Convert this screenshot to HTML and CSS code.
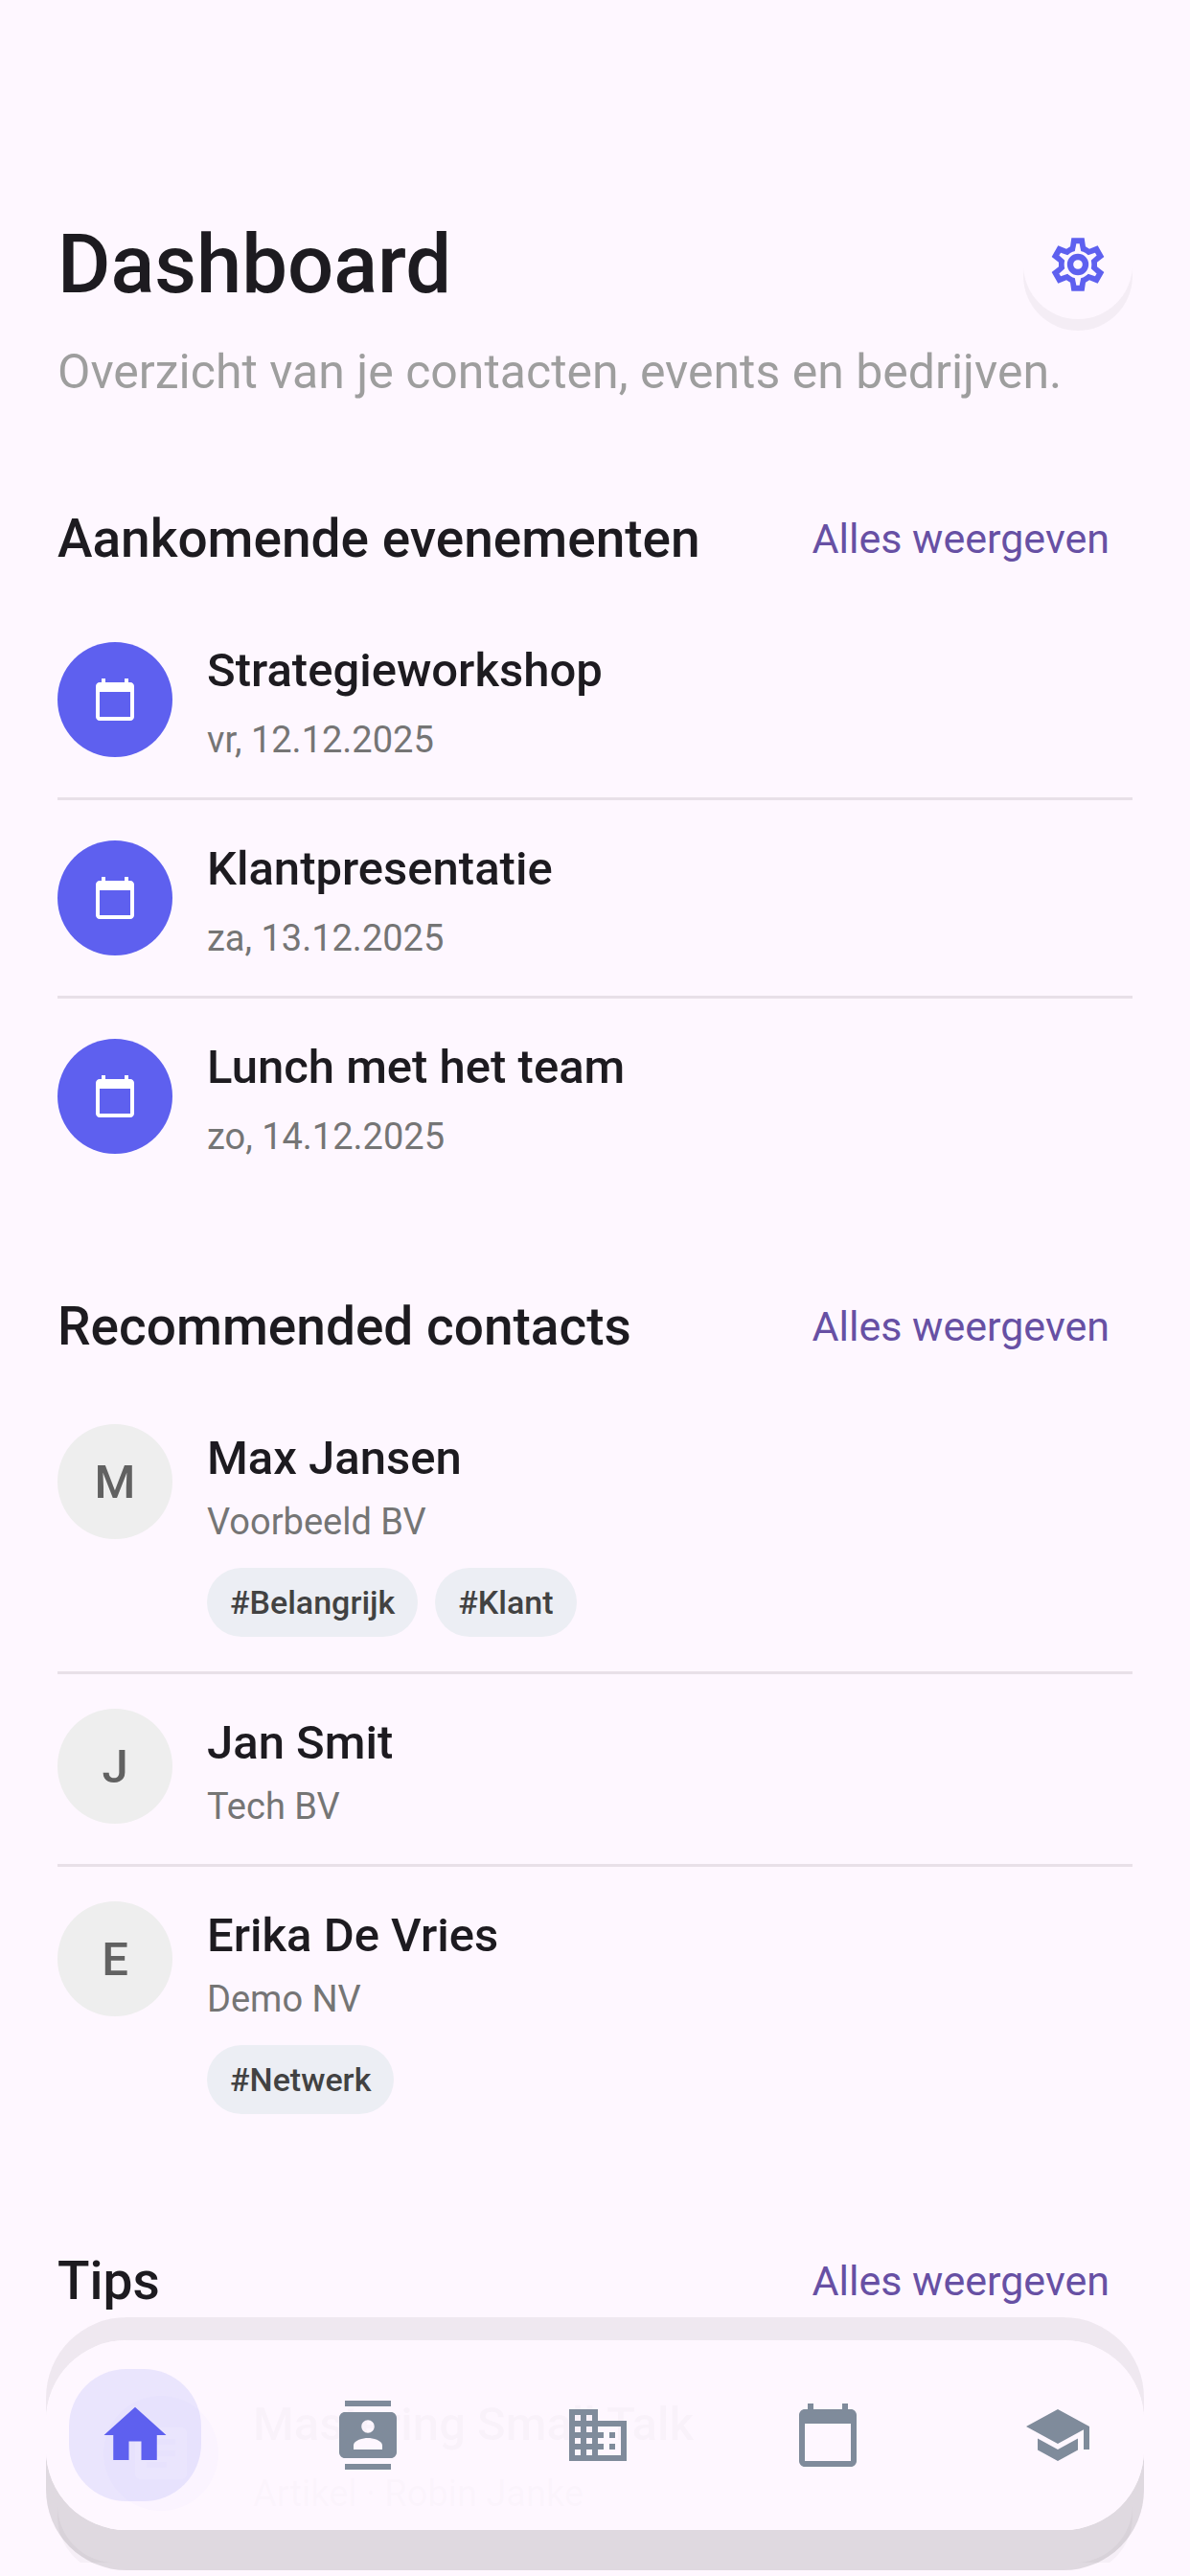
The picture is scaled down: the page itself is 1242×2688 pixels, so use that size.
FILE: index.html
```html
<!DOCTYPE html>
<html lang="nl">

<head>
    <meta charset="UTF-8">
    <meta name="viewport" content="width=device-width, initial-scale=1.0">
    <title>Dashboard</title>
    <link rel="stylesheet" href="styles.css">
</head>

<body>
    <!-- Shared icons -->
    <svg class="icon-defs" aria-hidden="true">
        <symbol id="icon-calendar" viewBox="0 0 24 24">
            <path d="M20 3h-1V1h-2v2H7V1H5v2H4c-1.1 0-2 .9-2 2v16c0 1.1.9 2 2 2h16c1.1 0 2-.9 2-2V5c0-1.1-.9-2-2-2zm0 18H4V8h16v13z" />
        </symbol>
    </svg>

    <main class="container">
        <header class="page-header">
            <div class="title-row">
                <h1>Dashboard</h1>
                <button type="button" class="settings-btn" aria-label="Instellingen">
                    <svg viewBox="-99 -99 198 198">
                        <path d="M-24-56-20-83H20L24-56 36-49 62-59 82-24 60-7V7L82 24 62 59 36 49 24 56 20 83H-20L-24 56-36 49-62 59-82 24-60 7V-7L-82-24-62-59-36-49z" />
                        <g class="gear-cutout">
                            <circle r="43" />
                            <path d="M-10-40-5-65H5L10-40z" />
                            <path d="M-10-40-5-65H5L10-40z" transform="rotate(60)" />
                            <path d="M-10-40-5-65H5L10-40z" transform="rotate(120)" />
                            <path d="M-10-40-5-65H5L10-40z" transform="rotate(180)" />
                            <path d="M-10-40-5-65H5L10-40z" transform="rotate(240)" />
                            <path d="M-10-40-5-65H5L10-40z" transform="rotate(300)" />
                        </g>
                        <circle class="gear-hub" r="24" />
                    </svg>
                </button>
            </div>
            <p class="subtitle">Overzicht van je contacten, events en bedrijven.</p>
        </header>

        <section class="section">
            <div class="section-header">
                <h2>Aankomende evenementen</h2>
                <a href="#events">Alles weergeven</a>
            </div>
            <ul class="list">
                <li class="list-item event">
                    <span class="avatar avatar-icon"><svg><use href="#icon-calendar" /></svg></span>
                    <div>
                        <h3>Strategieworkshop</h3>
                        <p>vr, 12.12.2025</p>
                    </div>
                </li>
                <li class="list-item event">
                    <span class="avatar avatar-icon"><svg><use href="#icon-calendar" /></svg></span>
                    <div>
                        <h3>Klantpresentatie</h3>
                        <p>za, 13.12.2025</p>
                    </div>
                </li>
                <li class="list-item event">
                    <span class="avatar avatar-icon"><svg><use href="#icon-calendar" /></svg></span>
                    <div>
                        <h3>Lunch met het team</h3>
                        <p>zo, 14.12.2025</p>
                    </div>
                </li>
            </ul>
        </section>

        <section class="section">
            <div class="section-header">
                <h2>Recommended contacts</h2>
                <a href="#contacts">Alles weergeven</a>
            </div>
            <ul class="list">
                <li class="list-item">
                    <span class="avatar">M</span>
                    <div>
                        <h3>Max Jansen</h3>
                        <p>Voorbeeld BV</p>
                        <div class="tags">
                            <span class="tag">#Belangrijk</span>
                            <span class="tag">#Klant</span>
                        </div>
                    </div>
                </li>
                <li class="list-item">
                    <span class="avatar">J</span>
                    <div>
                        <h3>Jan Smit</h3>
                        <p>Tech BV</p>
                    </div>
                </li>
                <li class="list-item">
                    <span class="avatar">E</span>
                    <div>
                        <h3>Erika De Vries</h3>
                        <p>Demo NV</p>
                        <div class="tags">
                            <span class="tag">#Netwerk</span>
                        </div>
                    </div>
                </li>
            </ul>
        </section>

        <section class="section">
            <div class="section-header">
                <h2>Tips</h2>
                <a href="#tips">Alles weergeven</a>
            </div>
            <article class="tip-card">
                <span class="avatar avatar-icon">
                    <svg viewBox="0 0 24 24">
                        <path d="M19 3H5c-1.1 0-2 .9-2 2v14c0 1.1.9 2 2 2h14c1.1 0 2-.9 2-2V5c0-1.1-.9-2-2-2zm-5 14H7v-2h7v2zm3-4H7v-2h10v2zm0-4H7V7h10v2z" />
                    </svg>
                </span>
                <div>
                    <h3>Mastering Small Talk</h3>
                    <p>Artikel · Robin Janke</p>
                </div>
            </article>
        </section>
    </main>

    <!-- Bottom navigation -->
    <nav class="bottom-nav">
        <a href="#home" class="nav-item active" aria-label="Home">
            <svg viewBox="0 0 24 24"><path d="M10 20v-6h4v6h5v-8h3L12 3 2 12h3v8z" /></svg>
        </a>
        <a href="#contacts" class="nav-item" aria-label="Contacten">
            <svg viewBox="0 0 24 24"><path d="M20 0H4v2h16V0zM4 24h16v-2H4v2zM20 4H4c-1.1 0-2 .9-2 2v12c0 1.1.9 2 2 2h16c1.1 0 2-.9 2-2V6c0-1.1-.9-2-2-2zm-8 2.75c1.24 0 2.25 1.01 2.25 2.25s-1.01 2.25-2.25 2.25S9.75 10.24 9.75 9 10.76 6.75 12 6.75zM17 17H7v-1.5c0-1.67 3.33-2.5 5-2.5s5 .83 5 2.5V17z" /></svg>
        </a>
        <a href="#companies" class="nav-item" aria-label="Bedrijven">
            <svg viewBox="0 0 24 24"><path d="M12 7V3H2v18h20V7H12zM6 19H4v-2h2v2zm0-4H4v-2h2v2zm0-4H4V9h2v2zm0-4H4V5h2v2zm4 12H8v-2h2v2zm0-4H8v-2h2v2zm0-4H8V9h2v2zm0-4H8V5h2v2zm10 12h-8v-2h2v-2h-2v-2h2v-2h-2V9h8v10zm-2-8h-2v2h2v-2zm0 4h-2v2h2v-2z" /></svg>
        </a>
        <a href="#events" class="nav-item" aria-label="Evenementen">
            <svg><use href="#icon-calendar" /></svg>
        </a>
        <a href="#tips" class="nav-item" aria-label="Tips">
            <svg viewBox="0 0 24 24"><path d="M5 13.18v4L12 21l7-3.82v-4L12 17l-7-3.82zM12 3L1 9l11 6 9-4.91V17h2V9L12 3z" /></svg>
        </a>
    </nav>
</body>

</html>
```
FILE: styles.css
```css
/* Basic Reset */
* {
    margin: 0;
    padding: 0;
    box-sizing: border-box;
}

body {
    font-family: Roboto, sans-serif;
    background-color: #fef7ff;
    color: #1d1b20;
}

svg {
    display: block;
    fill: currentColor;
}

.icon-defs {
    display: none;
}

.container {
    padding: 216px 60px 0;
}

/* Page header */
.title-row {
    display: flex;
    justify-content: space-between;
    align-items: center;
    height: 120px;
}

h1 {
    font-size: 85px;
    font-weight: 500;
    line-height: 120px;
}

.settings-btn {
    display: flex;
    justify-content: center;
    align-items: center;
    width: 114px;
    height: 114px;
    border: none;
    border-radius: 50%;
    background-color: #fef7ff;
    color: #5e60ef;
    box-shadow: 0 12px 0 rgba(0, 0, 0, 0.04);
    cursor: pointer;
}

.settings-btn svg {
    width: 66px;
    height: 66px;
}

.gear-cutout {
    fill: #fef7ff;
}

.gear-hub {
    fill: none;
    stroke: currentColor;
    stroke-width: 19;
}

.subtitle {
    margin-top: 16px;
    font-size: 50px;
    line-height: 72px;
    color: #9e9e9e;
}

/* Sections */
.section {
    margin-top: 72px;
}

.section-header {
    display: flex;
    justify-content: space-between;
    align-items: center;
    height: 132px;
    padding-right: 24px;
}

h2 {
    font-size: 55px;
    font-weight: 500;
}

.section-header a {
    font-size: 43px;
    color: #6750a4;
    text-decoration: none;
}

/* Lists */
.list {
    list-style: none;
}

.list-item {
    display: flex;
    align-items: flex-start;
    gap: 36px;
    padding: 36px 0;
}

.list-item + .list-item {
    border-top: 3px solid #e8e0e8;
}

.list-item.event {
    align-items: center;
}

h3 {
    font-size: 49px;
    font-weight: 500;
    line-height: 72px;
}

.list-item p,
.tip-card p {
    margin-top: 6px;
    font-size: 38px;
    line-height: 48px;
    color: #757575;
}

.event p,
.tip-card p {
    margin-top: 12px;
}

.avatar {
    display: flex;
    flex-shrink: 0;
    justify-content: center;
    align-items: center;
    width: 120px;
    height: 120px;
    border-radius: 50%;
    background-color: #eeeeee;
    color: #616161;
    font-size: 49px;
    font-weight: 500;
}

.avatar-icon {
    background-color: #5e60ef;
    color: white;
}

.avatar-icon svg {
    width: 48px;
    height: 48px;
}

.tags {
    display: flex;
    gap: 18px;
    margin-top: 24px;
}

.tag {
    padding: 0 24px;
    border-radius: 36px;
    background-color: #eceef4;
    color: #424242;
    font-size: 34px;
    font-weight: 500;
    line-height: 72px;
}

/* Tip card */
.tip-card {
    display: flex;
    align-items: center;
    gap: 36px;
    height: 228px;
    padding: 0 48px;
    border-radius: 60px;
    box-shadow: 0 12px 0 rgba(0, 0, 0, 0.03);
}

.tip-card .avatar-icon svg {
    width: 72px;
    height: 72px;
}

/* Bottom navigation */
.bottom-nav {
    position: fixed;
    right: 48px;
    bottom: 48px;
    left: 48px;
    display: flex;
    justify-content: space-between;
    align-items: center;
    height: 198px;
    padding: 0 24px;
    border-radius: 84px;
    background-color: rgba(254, 247, 255, 0.98);
    box-shadow: 0 -24px 0 rgba(0, 0, 0, 0.06), 0 42px 0 rgba(0, 0, 0, 0.12);
}

.nav-item {
    display: flex;
    justify-content: center;
    align-items: center;
    width: 132px;
    height: 138px;
    color: #7f8b9b;
}

.nav-item svg {
    width: 72px;
    height: 72px;
}

.nav-item.active {
    width: 138px;
    border-radius: 60px;
    background-color: rgba(94, 96, 239, 0.12);
    color: #5e60ef;
}

.nav-item.active svg {
    width: 78px;
    height: 78px;
}
```
